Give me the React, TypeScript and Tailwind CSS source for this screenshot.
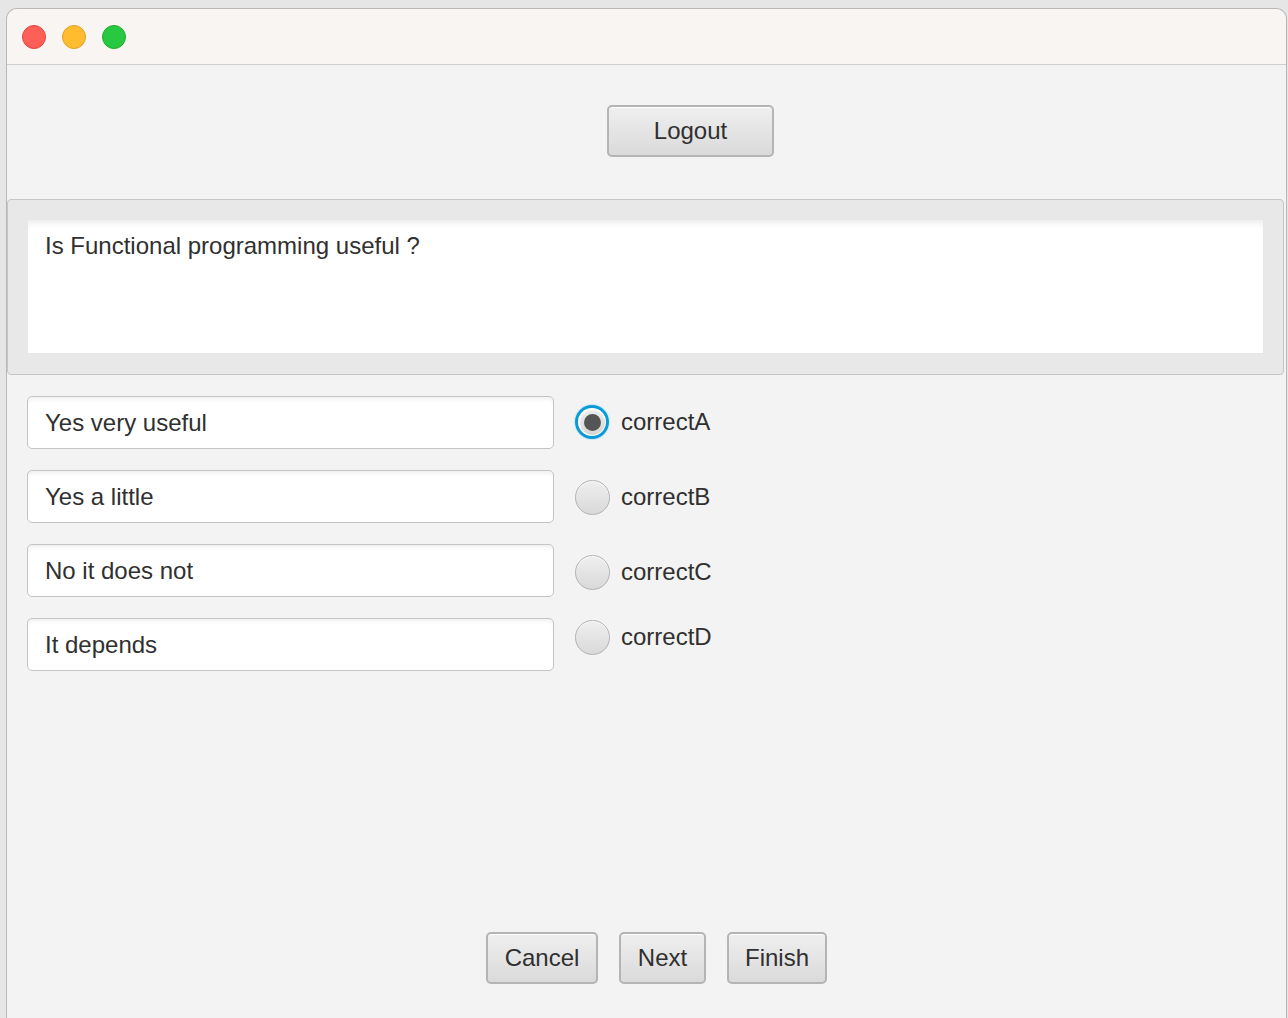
import React from "react";

const font = { fontFamily: '"Liberation Sans", Arial, sans-serif' };

function Btn({ label, w }: { label: string; w: string }) {
  return (
    <button
      className={`${w} h-[52px] rounded-[5px] border-2 border-[#b4b4b4] bg-gradient-to-b from-[#efefef] to-[#dadada] text-[24px] leading-[28px] text-[#303030] shadow-[inset_0_1px_0_rgba(255,255,255,0.9)] flex items-center justify-center`}
    >
      {label}
    </button>
  );
}

function Field({ text }: { text: string }) {
  return (
    <div className="w-[527px] h-[53px] rounded-[5px] border-[1.5px] border-[#c4c4c4] bg-white shadow-[inset_0_4px_4px_-2px_rgba(0,0,0,0.07)] flex items-center pl-[17px] text-[24px] leading-[28px] text-[#303030]">
      {text}
    </div>
  );
}

function Radio({ label, selected }: { label: string; selected?: boolean }) {
  return (
    <div className="flex items-center">
      {selected ? (
        <div className="w-[36px] h-[36px] rounded-full bg-[#cfe9f6] flex items-center justify-center">
          <div className="w-[34px] h-[34px] rounded-full bg-[#0a9ad6] flex items-center justify-center">
            <div className="w-[28px] h-[28px] rounded-full bg-white flex items-center justify-center">
              <div className="w-[25px] h-[25px] rounded-full bg-gradient-to-b from-[#ececec] to-[#d6d6d6] flex items-center justify-center">
                <div className="w-[17px] h-[17px] rounded-full bg-[#555555]" />
              </div>
            </div>
          </div>
        </div>
      ) : (
        <div className="w-[36px] h-[36px] flex items-center justify-center">
          <div className="w-[35px] h-[35px] rounded-full border-[1.5px] border-[#b2b2b2] bg-gradient-to-b from-[#efefef] to-[#d9d9d9] shadow-[inset_0_1px_0_rgba(255,255,255,0.9)]" />
        </div>
      )}
      <span className="ml-[11px] text-[24px] leading-[28px] text-[#303030]">{label}</span>
    </div>
  );
}

export default function App() {
  return (
    <div className="w-[1288px] h-[1018px] overflow-hidden bg-[#e6e6e6] pl-[6px] pt-[8px]" style={font}>
      <div className="w-[1281px] h-[1010px] flex flex-col rounded-t-[11px] border border-b-0 border-[#b8b8b8] bg-[#f3f3f3] overflow-hidden">
        <div className="h-[56px] shrink-0 bg-[#f9f5f2] border-b border-[#cfcfcf] flex items-center pl-[15px] gap-[16px]">
          <div className="w-[24px] h-[24px] rounded-full bg-[#fe5f57] border border-[#e2463f]" />
          <div className="w-[24px] h-[24px] rounded-full bg-[#febc2e] border border-[#e1a123]" />
          <div className="w-[24px] h-[24px] rounded-full bg-[#28c840] border border-[#1eac2d]" />
        </div>
        <div className="flex-1 flex flex-col">
          <div className="flex justify-center pt-[40px] pl-[88px]">
            <Btn label="Logout" w="w-[167px]" />
          </div>
          <div className="mt-[42px] mr-[2px] h-[176px] rounded-[4px] border-[1.5px] border-[#c6c6c6] bg-[#e8e8e8] p-[20px]">
            <div className="h-[133px] bg-white shadow-[inset_0_6px_6px_-3px_rgba(0,0,0,0.08)] pl-[17px] pt-[12px] text-[24px] leading-[28px] text-[#303030]">
              Is Functional programming useful ?
            </div>
          </div>
          <div className="flex pl-[20px] pt-[21px] gap-[20px]">
            <div className="flex flex-col gap-[21px]">
              <Field text="Yes very useful" />
              <Field text="Yes a little" />
              <Field text="No it does not" />
              <Field text="It depends" />
            </div>
            <div className="flex flex-col pt-[8px]">
              <Radio label="correctA" selected />
              <div className="h-[39px]" />
              <Radio label="correctB" />
              <div className="h-[39px]" />
              <Radio label="correctC" />
              <div className="h-[29px]" />
              <Radio label="correctD" />
            </div>
          </div>
          <div className="mt-auto pb-[34px] flex justify-center gap-[21px] pl-[20px]">
            <Btn label="Cancel" w="w-[112px]" />
            <Btn label="Next" w="w-[87px]" />
            <Btn label="Finish" w="w-[100px]" />
          </div>
        </div>
      </div>
    </div>
  );
}
